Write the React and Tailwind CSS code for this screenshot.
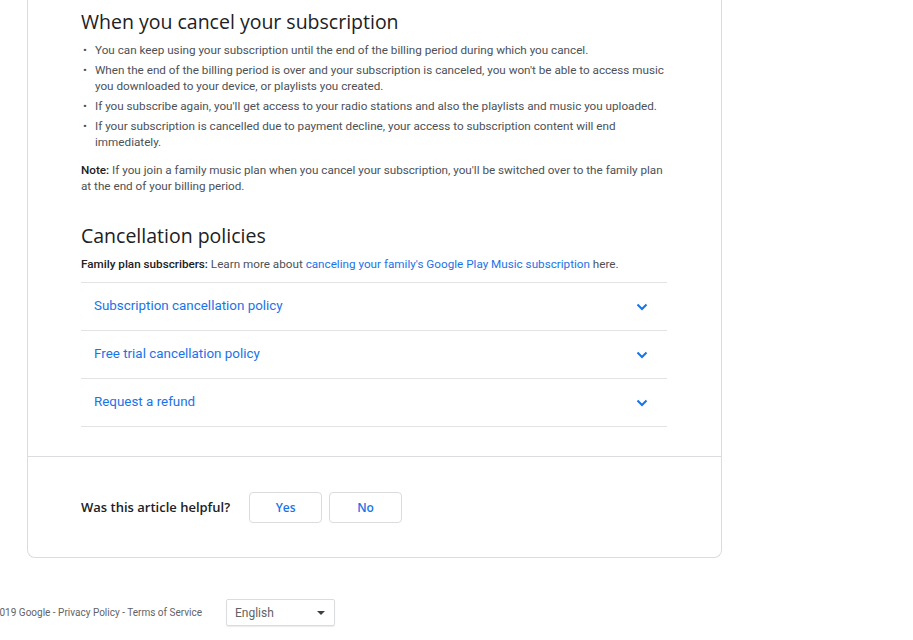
import { useState } from "react";

const bullets = [
  "You can keep using your subscription until the end of the billing period during which you cancel.",
  "When the end of the billing period is over and your subscription is canceled, you won't be able to access music you downloaded to your device, or playlists you created.",
  "If you subscribe again, you'll get access to your radio stations and also the playlists and music you uploaded.",
  "If your subscription is cancelled due to payment decline, your access to subscription content will end immediately.",
];

const policies = ["Subscription cancellation policy", "Free trial cancellation policy", "Request a refund"];

function Chevron() {
  return (
    <svg width="12" height="8" viewBox="0 0 12 8" className="text-[#1a73e8]">
      <path d="M1.5 1.5 L6 6 L10.5 1.5" fill="none" stroke="currentColor" strokeWidth="2" />
    </svg>
  );
}

function Accordion({ title }) {
  const [open, setOpen] = useState(false);
  return (
    <div className="border-b border-[#e3e3e3]">
      <button
        onClick={() => setOpen(!open)}
        className="flex h-[47px] w-full items-center justify-between pl-[13px] pr-[19px] text-left text-[13.4px] text-[#1a73e8]"
      >
        <span>{title}</span>
        <Chevron />
      </button>
    </div>
  );
}

export default function App() {
  return (
    <div className="min-h-[640px] w-[913px] bg-white font-['Roboto',sans-serif] text-[#4d5156]">
      <div className="ml-[27px] w-[695px] rounded-b-[8px] border-x border-b border-[#dadce0]">
        <div className="pl-[53px] pr-[54px] pt-[8px]">
          <h2 className="font-['Open_Sans',sans-serif] text-[19.5px] leading-[28px] text-[#202124]">
            When you cancel your subscription
          </h2>
          <ul className="mt-[6px] flex flex-col gap-[4px] text-[11.7px] leading-[16px]">
            {bullets.map((b, i) => (
              <li key={i} className="flex">
                <span className="w-[14px] shrink-0 pl-[2px]">•</span>
                <span>{b}</span>
              </li>
            ))}
          </ul>
          <p className="mt-[12px] text-[11.7px] leading-[16px]">
            <b className="font-medium text-[#202124]">Note:</b> If you join a family music plan when you cancel your
            subscription, you'll be switched over to the family plan at the end of your billing period.
          </p>

          <h2 className="mt-[28px] font-['Open_Sans',sans-serif] text-[19.5px] leading-[28px] text-[#202124]">
            Cancellation policies
          </h2>
          <p className="mt-[6px] text-[11.7px] leading-[16px]">
            <b className="font-medium text-[#202124]">Family plan subscribers:</b> Learn more about{" "}
            <a className="text-[#1a73e8]">canceling your family's Google Play Music subscription</a> here.
          </p>
          <div className="mt-[10px] border-t border-[#e3e3e3]">
            {policies.map((p) => (
              <Accordion key={p} title={p} />
            ))}
          </div>
        </div>

        <div className="mt-[29px] flex items-center border-t border-[#dadce0] pb-[34px] pl-[53px] pt-[35px]">
          <span className="font-['Open_Sans',sans-serif] text-[13px] font-semibold text-[#202124]">
            Was this article helpful?
          </span>
          <button className="ml-[19px] h-[31px] w-[73px] rounded-[4px] border border-[#dadce0] font-['Open_Sans',sans-serif] text-[12px] font-semibold text-[#1a73e8]">
            Yes
          </button>
          <button className="ml-[7px] h-[31px] w-[73px] rounded-[4px] border border-[#dadce0] font-['Open_Sans',sans-serif] text-[12px] font-semibold text-[#1a73e8]">
            No
          </button>
        </div>
      </div>

      <div className="mt-[41px] flex items-center">
        <span className="ml-[-14px] whitespace-nowrap text-[10px] text-[#5f6368]">
          ©2019 Google - Privacy Policy - Terms of Service
        </span>
        <div className="ml-[24px] flex h-[27px] w-[109px] items-center justify-between rounded-[2px] border border-[#dadce0] pl-[8px] pr-[9px] text-[12px] text-[#5f6368] shadow-[0_1px_1px_rgba(0,0,0,0.08)]">
          <span>English</span>
          <svg width="8" height="4" viewBox="0 0 8 4">
            <path d="M0 0 L8 0 L4 4 Z" fill="#3c4043" />
          </svg>
        </div>
      </div>
    </div>
  );
}
